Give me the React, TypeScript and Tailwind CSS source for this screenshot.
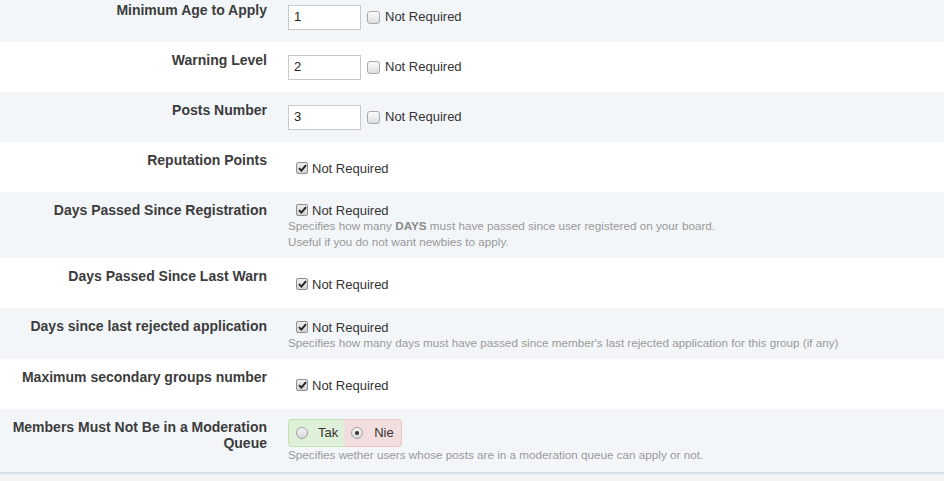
import React from "react";

const GRAY = "bg-[#f3f6f9]";
const WHITE = "bg-white";

function Checkbox({ checked }: { checked: boolean }) {
  if (checked) {
    return (
      <span className="flex h-[12px] w-[12px] shrink-0 items-center justify-center rounded-[2px] border border-[#8f8f8f] bg-gradient-to-b from-[#ededed] to-[#d3d3d3]">
        <svg width="9" height="8" viewBox="0 0 9 8">
          <path d="M1 4.2 L3.4 6.6 L8 1.2" fill="none" stroke="#222" strokeWidth="1.9" />
        </svg>
      </span>
    );
  }
  return (
    <span className="block h-[13px] w-[13px] shrink-0 rounded-[3px] border border-[#a9a9a9] bg-gradient-to-b from-[#fbfbfb] to-[#dedede]" />
  );
}

function Radio({ checked }: { checked: boolean }) {
  return (
    <span className="flex h-[12px] w-[12px] shrink-0 items-center justify-center rounded-full border border-[#a3a3a3] bg-gradient-to-b from-[#f6f6f6] to-[#d6d6d6]">
      {checked && <span className="block h-[4px] w-[4px] rounded-full bg-[#333]" />}
    </span>
  );
}

function Row({
  label,
  bg,
  minH = "min-h-[50px]",
  children,
}: {
  label: React.ReactNode;
  bg: string;
  minH?: string;
  children: React.ReactNode;
}) {
  return (
    <div className={`flex ${bg} ${minH}`}>
      <div className="w-[267px] shrink-0 pl-[10px] pt-[10px] text-right text-[14px] font-bold leading-[16px] text-[#3c3c3c]">
        {label}
      </div>
      <div className="ml-[21px] flex flex-col justify-center py-[8px]">{children}</div>
    </div>
  );
}

function InputField({ value }: { value: string }) {
  return (
    <div className="flex items-center">
      <div className="flex h-[25px] w-[73px] items-center border border-[#c9c9c9] bg-white pl-[5px] text-[13px] text-[#222]">
        {value}
      </div>
      <span className="ml-[6px]">
        <Checkbox checked={false} />
      </span>
      <span className="ml-[5px] text-[13px] text-[#333]">Not Required</span>
    </div>
  );
}

function CheckLine() {
  return (
    <div className="flex h-[18px] items-end">
      <span className="mb-[2px] ml-[8px]">
        <Checkbox checked={true} />
      </span>
      <span className="ml-[4px] text-[13px] leading-[15px] text-[#333]">Not Required</span>
    </div>
  );
}

function Desc({ children }: { children: React.ReactNode }) {
  return <div className="text-[11.7px] leading-[16px] text-[#999]">{children}</div>;
}

export default function App() {
  return (
    <div
      className="h-screen w-full overflow-hidden bg-[#f4f4f4]"
      style={{ fontFamily: '"Liberation Sans", Arial, sans-serif' }}
    >
      <div className="-mt-[8px]">
        <Row label="Minimum Age to Apply" bg={GRAY}>
          <InputField value="1" />
        </Row>
        <Row label="Warning Level" bg={WHITE}>
          <InputField value="2" />
        </Row>
        <Row label="Posts Number" bg={GRAY}>
          <InputField value="3" />
        </Row>
        <Row label="Reputation Points" bg={WHITE}>
          <CheckLine />
        </Row>
        <Row label="Days Passed Since Registration" bg={GRAY}>
          <CheckLine />
          <Desc>
            Specifies how many <span className="font-bold text-[#8a8a8a]">DAYS</span> must have passed since user
            registered on your board.
            <br />
            Useful if you do not want newbies to apply.
          </Desc>
        </Row>
        <Row label="Days Passed Since Last Warn" bg={WHITE}>
          <CheckLine />
        </Row>
        <Row label="Days since last rejected application" bg={GRAY} minH="min-h-[51px]">
          <CheckLine />
          <Desc>
            Specifies how many days must have passed since member's last rejected application for this group (if
            any)
          </Desc>
        </Row>
        <Row label="Maximum secondary groups number" bg={WHITE}>
          <CheckLine />
        </Row>
        <Row label="Members Must Not Be in a Moderation Queue" bg={GRAY} minH="min-h-[63px]">
          <div className="flex h-[28px] w-fit">
            <div className="flex items-center rounded-l-[4px] border-y border-l border-[#c2e4b4] bg-[#dff0d8] pl-[7px] pr-[6px]">
              <Radio checked={false} />
              <span className="ml-[10px] text-[13px] text-[#333]">Tak</span>
            </div>
            <div className="flex items-center rounded-r-[4px] border-y border-r border-[#ebc6c6] bg-[#f2dede] pl-[7px] pr-[7px]">
              <Radio checked={true} />
              <span className="ml-[11px] text-[13px] text-[#333]">Nie</span>
            </div>
          </div>
          <Desc>Specifies wether users whose posts are in a moderation queue can apply or not.</Desc>
        </Row>
        <div className="h-[2px] bg-[#d6e1ea]" />
      </div>
    </div>
  );
}
